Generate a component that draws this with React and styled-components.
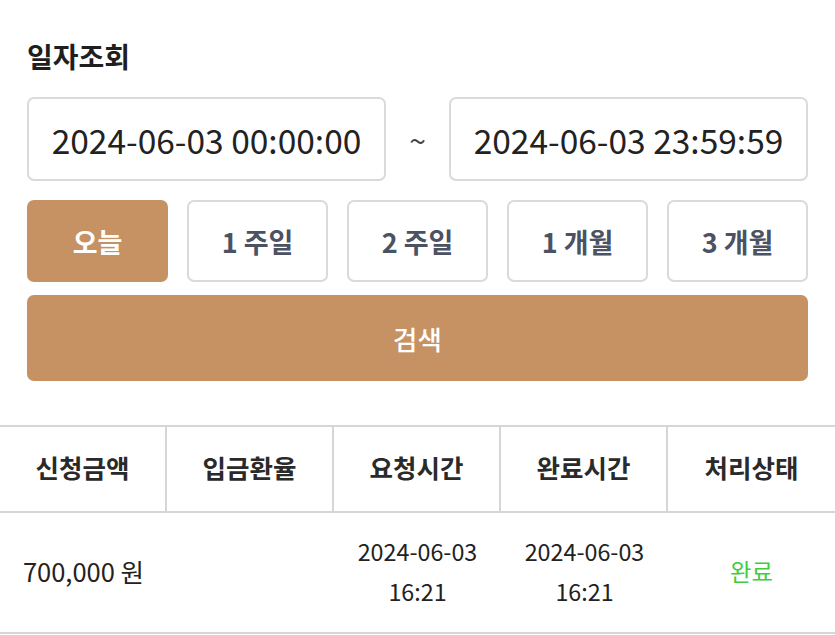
import React, { useState } from "react";
import styled, { createGlobalStyle } from "styled-components";

const GlobalStyle = createGlobalStyle`
  html, body {
    margin: 0;
    padding: 0;
    background: #ffffff;
  }
  body {
    font-family: "Noto Sans CJK KR", "Noto Sans", sans-serif;
    color: #222222;
  }
`;

const PERIODS = ["오늘", "1 주일", "2 주일", "1 개월", "3 개월"];

const COLUMNS = ["신청금액", "입금환율", "요청시간", "완료시간", "처리상태"];

const rows = [
  {
    id: 1,
    amount: "700,000 원",
    rate: "",
    requested: ["2024-06-03", "16:21"],
    completed: ["2024-06-03", "16:21"],
    status: "완료",
  },
];

export default function App() {
  const [period, setPeriod] = useState("오늘");

  return (
    <>
      <GlobalStyle />
      <Page>
        <Filter>
          <Title>일자조회</Title>
          <DateRow>
            <DateBox>2024-06-03 00:00:00</DateBox>
            <Tilde>~</Tilde>
            <DateBox>2024-06-03 23:59:59</DateBox>
          </DateRow>
          <PeriodRow>
            {PERIODS.map((p) => (
              <PeriodButton key={p} $active={period === p} onClick={() => setPeriod(p)}>
                {p}
              </PeriodButton>
            ))}
          </PeriodRow>
          <SearchButton>검색</SearchButton>
        </Filter>

        <Table>
          <HeadRow>
            {COLUMNS.map((c) => (
              <HeadCell key={c}>{c}</HeadCell>
            ))}
          </HeadRow>
          {rows.map((r) => (
            <BodyRow key={r.id}>
              <Cell $size={25.5}>{r.amount}</Cell>
              <Cell>{r.rate}</Cell>
              <Cell>
                <span>{r.requested[0]}</span>
                <span>{r.requested[1]}</span>
              </Cell>
              <Cell>
                <span>{r.completed[0]}</span>
                <span>{r.completed[1]}</span>
              </Cell>
              <Cell>
                <Status>{r.status}</Status>
              </Cell>
            </BodyRow>
          ))}
        </Table>
      </Page>
    </>
  );
}

const Page = styled.div`
  width: 835px;
  padding-top: 37px;
`;

const Filter = styled.div`
  padding: 0 27px;
`;

const Title = styled.h2`
  margin: 0 0 22px;
  font-size: 28px;
  line-height: 38px;
  font-weight: 700;
  color: #1f1f1f;
`;

const DateRow = styled.div`
  display: flex;
  align-items: center;
`;

const DateBox = styled.div`
  box-sizing: border-box;
  flex: 0 0 359px;
  height: 84px;
  display: flex;
  align-items: center;
  justify-content: center;
  border: 2px solid #dadada;
  border-radius: 7px;
  font-size: 33.5px;
  color: #222222;
`;

const Tilde = styled.div`
  flex: 1;
  text-align: center;
  font-size: 30px;
  color: #444444;
`;

const PeriodRow = styled.div`
  display: grid;
  grid-template-columns: repeat(5, 1fr);
  gap: 19px;
  margin-top: 19px;
`;

const PeriodButton = styled.button`
  box-sizing: border-box;
  height: 82px;
  border-radius: 7px;
  border: 2px solid ${({ $active }) => ($active ? "#c69263" : "#dadada")};
  background: ${({ $active }) => ($active ? "#c69263" : "#ffffff")};
  color: ${({ $active }) => ($active ? "#ffffff" : "#4b5263")};
  font-family: inherit;
  font-size: 27px;
  font-weight: 700;
  cursor: pointer;
  padding: 0;
`;

const SearchButton = styled.button`
  box-sizing: border-box;
  display: block;
  width: 100%;
  height: 86px;
  margin-top: 13px;
  border: none;
  border-radius: 7px;
  background: #c69263;
  color: #ffffff;
  font-family: inherit;
  font-size: 26.5px;
  font-weight: 500;
  cursor: pointer;
`;

const Table = styled.div`
  margin-top: 44px;
  border-top: 2px solid #d6d6d6;
`;

const HeadRow = styled.div`
  display: grid;
  grid-template-columns: 167px 167px 167px 167px 1fr;
  height: 84px;
  border-bottom: 2px solid #d6d6d6;
`;

const HeadCell = styled.div`
  display: flex;
  align-items: center;
  justify-content: center;
  padding-bottom: 6px;
  font-size: 25.5px;
  font-weight: 700;
  color: #2a2a2a;
  border-right: 2px solid #d6d6d6;

  &:last-child {
    border-right: none;
  }
`;

const BodyRow = styled.div`
  display: grid;
  grid-template-columns: 167px 167px 167px 167px 1fr;
  height: 119px;
  border-bottom: 2px solid #d6d6d6;
`;

const Cell = styled.div`
  display: flex;
  flex-direction: column;
  align-items: center;
  justify-content: center;
  padding-bottom: 3px;
  font-size: ${({ $size }) => $size || 23.3}px;
  line-height: 40px;
  color: #222222;
`;

const Status = styled.span`
  color: #3fcc3f;
`;
